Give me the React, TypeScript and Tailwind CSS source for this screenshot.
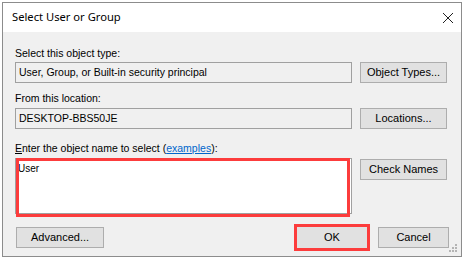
import React from "react";

const sans = "font-['Liberation_Sans',Arial,sans-serif]";

function Btn({ label, className = "" }: { label: React.ReactNode; className?: string }) {
  return (
    <div
      className={`flex h-[21px] items-center justify-center border border-[#adadad] bg-[#e1e1e1] text-[11px] text-black ${className}`}
    >
      {label}
    </div>
  );
}

export default function App() {
  return (
    <div className={`h-[259px] w-[465px] bg-white pl-[2px] pt-[2px] ${sans}`}>
      <div className="relative flex h-[255px] w-[460px] flex-col border border-[#8c8c8c]">
        {/* Title bar */}
        <div className="flex h-[29px] items-center justify-between bg-white pl-[9px] pr-[6px]">
          <span className="text-[11.2px] text-black font-['Noto_Sans',sans-serif]">Select User or Group</span>
          <svg width="12" height="12" viewBox="0 0 12 12" className="mr-[1px]">
            <path d="M1 1 L11 11 M11 1 L1 11" stroke="#222" strokeWidth="1" />
          </svg>
        </div>

        {/* Body */}
        <div className="flex flex-1 flex-col bg-[#f0f0f0] pl-[12px] pr-[12px]">
          <div className="mt-[14px] h-[14px] text-[10.5px] leading-[14px] text-black">Select this object type:</div>
          <div className="mt-[2px] flex gap-[8px]">
            <div className="flex h-[21px] w-[337px] items-center border border-[#a0a0a0] bg-[#f0f0f0] pl-[3px] text-[10.5px] text-black">
              User, Group, or Built-in security principal
            </div>
            <Btn label="Object Types..." className="w-[87px]" />
          </div>

          <div className="mt-[8px] h-[14px] text-[10.5px] leading-[14px] text-black">From this location:</div>
          <div className="mt-[3px] flex gap-[8px]">
            <div className="flex h-[21px] w-[337px] items-center border border-[#a0a0a0] bg-[#f0f0f0] pl-[3px] text-[10.5px] text-black">
              DESKTOP-BBS50JE
            </div>
            <Btn label="Locations..." className="w-[87px]" />
          </div>

          <div className="mt-[12px] h-[14px] text-[10.5px] leading-[14px] text-black">
            <span className="underline">E</span>nter the object name to select (
            <span className="text-[#0066cc] underline">examples</span>):
          </div>
          <div className="mt-[3px] flex gap-[8px]">
            <div className="relative h-[56px] w-[337px] border border-[#a0a0a0] bg-white">
              <div className="pl-[2px] pt-[4px] text-[10px] leading-[12px] text-black">User</div>
              <div className="absolute -bottom-[4px] left-0 right-[1px] top-[-1px] border-[3px] border-[#fc3c3c]" />
            </div>
            <Btn label="Check Names" className="mt-[1px] w-[87px]" />
          </div>

          <div className="mt-[10px] flex items-center">
            <Btn label="Advanced..." className="ml-[1px] w-[88px]" />
            <div className="ml-auto border-[3px] border-[#fc3c3c] p-0">
              <Btn label="OK" className="h-[17px] w-[70px] border-0" />
            </div>
            <Btn label="Cancel" className="ml-[8px] w-[71px]" />
          </div>
        </div>

        {/* Resize grip */}
        <svg width="10" height="10" viewBox="0 0 10 10" className="absolute bottom-[3px] right-[3px]">
          <rect x="7" y="1" width="2" height="2" fill="#b4b4b4" />
          <rect x="4" y="4" width="2" height="2" fill="#b4b4b4" />
          <rect x="7" y="4" width="2" height="2" fill="#b4b4b4" />
          <rect x="1" y="7" width="2" height="2" fill="#b4b4b4" />
          <rect x="4" y="7" width="2" height="2" fill="#b4b4b4" />
          <rect x="7" y="7" width="2" height="2" fill="#b4b4b4" />
        </svg>
      </div>
    </div>
  );
}
